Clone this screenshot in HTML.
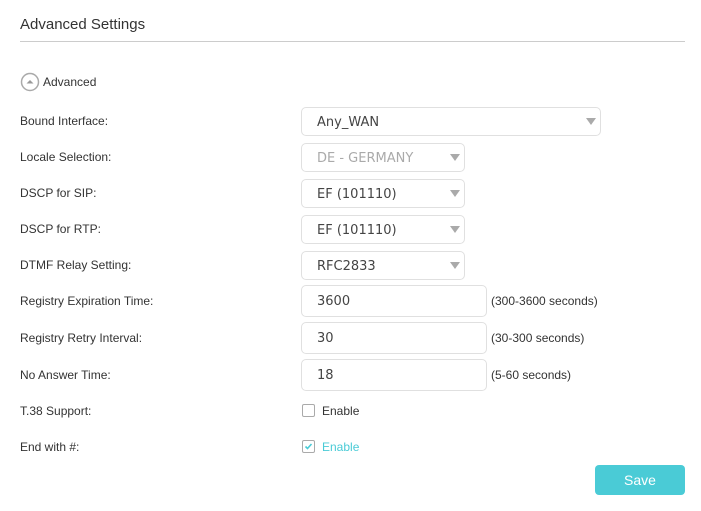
<!DOCTYPE html>
<html><head><style>
body{margin:0;width:701px;height:511px;background:#fff;font-family:"Liberation Sans",Arial,sans-serif;position:relative;overflow:hidden;color:#333}
.a{position:absolute}
.t{left:20px;top:16px;font-size:15px;color:#333}
.hr{left:20px;top:41px;width:665px;height:1px;background:#ccc}
.lbl{left:20px;font-size:12px;color:#333;line-height:14px}
.box{position:absolute;left:301px;border:1px solid #e0e0e0;border-radius:5px;box-sizing:border-box;font-family:"DejaVu Sans",sans-serif;font-size:13px;color:#444;padding-left:15px}
.arr{position:absolute;right:4px;top:10px;width:0;height:0;border-left:5px solid transparent;border-right:5px solid transparent;border-top:7px solid #aaa}
.hint{left:491px;font-size:12px;color:#333}
.cb{position:absolute;left:302px;width:11px;height:11px;border:1px solid #aaa;border-radius:2px}
</style></head><body>
<div class="a t">Advanced Settings</div>
<div class="a hr"></div>
<svg class="a" style="left:20px;top:72px" width="20" height="20"><circle cx="10" cy="10" r="8.5" fill="none" stroke="#aaa" stroke-width="1.5"/><path d="M6.5 11.5 L10 8 L13.5 11.5Z" fill="#999"/></svg>
<div class="a" style="left:43px;top:75px;font-size:12px">Advanced</div>

<div class="a lbl" style="top:114px">Bound Interface:</div>
<div class="a lbl" style="top:150px">Locale Selection:</div>
<div class="a lbl" style="top:186px">DSCP for SIP:</div>
<div class="a lbl" style="top:222px">DSCP for RTP:</div>
<div class="a lbl" style="top:258px">DTMF Relay Setting:</div>
<div class="a lbl" style="top:294px">Registry Expiration Time:</div>
<div class="a lbl" style="top:331px">Registry Retry Interval:</div>
<div class="a lbl" style="top:368px">No Answer Time:</div>
<div class="a lbl" style="top:404px">T.38 Support:</div>
<div class="a lbl" style="top:440px">End with #:</div>

<div class="box" style="top:107px;width:300px;height:29px;line-height:29px">Any_WAN<div class="arr"></div></div>
<div class="box" style="top:143px;width:164px;height:29px;line-height:29px;color:#aaa">DE - GERMANY<div class="arr"></div></div>
<div class="box" style="top:179px;width:164px;height:29px;line-height:29px">EF (101110)<div class="arr"></div></div>
<div class="box" style="top:215px;width:164px;height:29px;line-height:29px">EF (101110)<div class="arr"></div></div>
<div class="box" style="top:251px;width:164px;height:29px;line-height:29px">RFC2833<div class="arr"></div></div>
<div class="box" style="top:285px;width:186px;height:32px;line-height:31px">3600</div>
<div class="box" style="top:322px;width:186px;height:32px;line-height:31px">30</div>
<div class="box" style="top:359px;width:186px;height:32px;line-height:31px">18</div>
<div class="a hint" style="top:294px">(300-3600 seconds)</div>
<div class="a hint" style="top:331px">(30-300 seconds)</div>
<div class="a hint" style="top:368px">(5-60 seconds)</div>

<div class="cb" style="top:404px"></div>
<div class="a" style="left:322px;top:404px;font-size:12px">Enable</div>
<div class="cb" style="top:440px"></div>
<svg class="a" style="left:302px;top:440px" width="13" height="13"><path d="M3.5 6.5 L5.5 8.5 L9.5 4" fill="none" stroke="#4acbd6" stroke-width="1.6"/></svg>
<div class="a" style="left:322px;top:440px;font-size:12px;color:#4acbd6">Enable</div>

<div class="a" style="left:595px;top:465px;width:90px;height:30px;background:#4acbd6;border-radius:4px;color:#fff;font-size:14px;text-align:center;line-height:30px">Save</div>
</body></html>
